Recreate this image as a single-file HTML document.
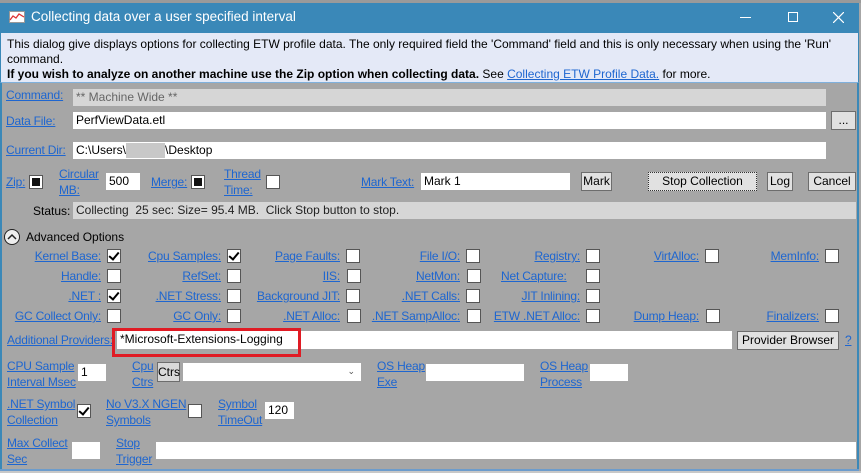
<!DOCTYPE html>
<html><head><meta charset="utf-8"><style>
*{margin:0;padding:0;box-sizing:border-box}
body{width:861px;height:473px;overflow:hidden;background:#a6a6a6;font-family:"Liberation Sans",sans-serif;font-size:12px;color:#000;position:relative}
div,span{position:absolute}
.t{white-space:nowrap;line-height:14px}
.l{color:#1e66d0;text-decoration:underline;white-space:nowrap;line-height:15px;letter-spacing:-0.2px}
.r{text-align:right}
.f{background:#fff;height:17px;padding-left:3px;line-height:17px;white-space:nowrap}
.cb{width:14px;height:14px;background:#fff;border:1px solid #555}
.ck::after{content:"";position:absolute;left:3px;top:0px;width:4px;height:8px;border:solid #000;border-width:0 2px 2px 0;transform:rotate(40deg)}
.fl::after{content:"";position:absolute;left:2px;top:2px;width:8px;height:8px;background:#111}
.b{background:#e1e1e1;border:1px solid #6d6d6d;text-align:center;line-height:16px;height:19px;white-space:nowrap}
</style></head><body>
<div style="left:0;top:0;width:861px;height:3px;background:#9a9a9a"></div>
<div style="left:0;top:3px;width:859px;height:30px;background:#3a88b8"></div>
<svg style="position:absolute;left:9px;top:11px" width="16" height="12"><rect x="0.5" y="0.5" width="15" height="11" fill="#fff" stroke="#999"/><polyline points="1,9 4,5 7,7 10,3 15,6" fill="none" stroke="#d33" stroke-width="1.3"/></svg>
<div class="t" style="left:31px;top:10px;color:#fff;font-size:13.5px">Collecting data over a user specified interval</div>
<div style="left:740px;top:17px;width:11px;height:1px;background:#fff"></div>
<div style="left:788px;top:12px;width:10px;height:10px;border:1px solid #fff"></div>
<svg style="position:absolute;left:833px;top:12px" width="11" height="11"><path d="M0,0L11,11M11,0L0,11" stroke="#fff" stroke-width="1.2"/></svg>
<div style="left:0;top:33px;width:859px;height:50px;background:#e4e9f7;border-left:1px solid #3a88b8;border-right:1px solid #3a88b8;border-bottom:1px solid #7fb0dc"></div>
<div class="t" style="left:7px;top:37px">This dialog give displays options for collecting ETW profile data. The only required field the 'Command' field and this is only necessary when using the 'Run'</div>
<div class="t" style="left:7px;top:52px">command.</div>
<div class="t" style="left:7px;top:67px"><b>If you wish to analyze on another machine use the Zip option when collecting data.</b> See <span class="l" style="position:static;letter-spacing:0">Collecting ETW Profile Data.</span> for more.</div>
<div style="left:0;top:83px;width:2px;height:388px;background:#3a88b8"></div>
<div style="left:857px;top:83px;width:2px;height:388px;background:#3a88b8"></div>
<div style="left:0;top:469px;width:859px;height:2px;background:#6c9ccc"></div>
<div style="left:0;top:471px;width:861px;height:2px;background:#c8c8c8"></div>

<div class="l" style="left:6px;top:88px">Command:</div>
<div class="f" style="left:73px;top:89px;width:753px;background:#d6d6d6;color:#666">** Machine Wide **</div>
<div class="l" style="left:6px;top:114px">Data File:</div>
<div class="f" style="left:73px;top:112px;width:753px">PerfViewData.etl</div>
<div class="b" style="left:831px;top:111px;width:25px">...</div>
<div class="l" style="left:6px;top:143px">Current Dir:</div>
<div class="f" style="left:73px;top:142px;width:753px">C:\Users\<span style="position:static;display:inline-block;width:39px;height:15px;background:#c8c8c8;vertical-align:middle"></span>\Desktop</div>

<div class="l" style="left:6px;top:175px">Zip:</div>
<div class="cb fl" style="left:29px;top:175px"></div>
<div class="l" style="left:59px;top:167px">Circular</div><div class="l" style="left:59px;top:183px">MB:</div>
<div class="f" style="left:106px;top:173px;width:34px">500</div>
<div class="l" style="left:151px;top:175px">Merge:</div>
<div class="cb fl" style="left:191px;top:175px"></div>
<div class="l" style="left:224px;top:167px">Thread</div><div class="l" style="left:224px;top:183px">Time:</div>
<div class="cb" style="left:266px;top:175px"></div>
<div class="l" style="left:361px;top:175px">Mark Text:</div>
<div class="f" style="left:421px;top:173px;width:149px">Mark 1</div>
<div class="b" style="left:581px;top:172px;width:31px">Mark</div>
<div class="b" style="left:648px;top:172px;width:109px;border:1px dotted #333">Stop Collection</div>
<div class="b" style="left:767px;top:172px;width:26px">Log</div>
<div class="b" style="left:808px;top:172px;width:48px">Cancel</div>

<div class="t" style="left:33px;top:204px">Status:</div>
<div class="f" style="left:73px;top:202px;width:783px;background:#d6d6d6;color:#222;line-height:17px">Collecting &nbsp;25 sec: Size= 95.4 MB. &nbsp;Click Stop button to stop.</div>

<div style="left:4px;top:229px;width:16px;height:16px;border:1px solid #222;border-radius:50%;background:#eee"></div>
<svg style="position:absolute;left:7px;top:233px" width="10" height="8"><path d="M1,6L5,2L9,6" fill="none" stroke="#222" stroke-width="1.5"/></svg>
<div class="t" style="left:26px;top:230px">Advanced Options</div>

<div class="l r" style="left:0;width:101px;top:249px">Kernel Base:</div><div class="cb ck" style="left:107px;top:249px"></div>
<div class="l r" style="left:120px;width:101px;top:249px">Cpu Samples:</div><div class="cb ck" style="left:227px;top:249px"></div>
<div class="l r" style="left:239px;width:101px;top:249px">Page Faults:</div><div class="cb" style="left:346px;top:249px"></div>
<div class="l r" style="left:359px;width:101px;top:249px">File I/O:</div><div class="cb" style="left:466px;top:249px"></div>
<div class="l r" style="left:479px;width:101px;top:249px">Registry:</div><div class="cb" style="left:586px;top:249px"></div>
<div class="l r" style="left:598px;width:101px;top:249px">VirtAlloc:</div><div class="cb" style="left:705px;top:249px"></div>
<div class="l r" style="left:718px;width:101px;top:249px">MemInfo:</div><div class="cb" style="left:825px;top:249px"></div>

<div class="l r" style="left:0;width:101px;top:269px">Handle:</div><div class="cb" style="left:107px;top:269px"></div>
<div class="l r" style="left:120px;width:101px;top:269px">RefSet:</div><div class="cb" style="left:227px;top:269px"></div>
<div class="l r" style="left:239px;width:101px;top:269px">IIS:</div><div class="cb" style="left:347px;top:269px"></div>
<div class="l r" style="left:359px;width:101px;top:269px">NetMon:</div><div class="cb" style="left:467px;top:269px"></div>
<div class="l" style="left:501px;top:269px">Net Capture:</div><div class="cb" style="left:586px;top:269px"></div>

<div class="l r" style="left:0;width:101px;top:289px">.NET :</div><div class="cb ck" style="left:107px;top:289px"></div>
<div class="l r" style="left:120px;width:101px;top:289px">.NET Stress:</div><div class="cb" style="left:227px;top:289px"></div>
<div class="l r" style="left:239px;width:101px;top:289px">Background JIT:</div><div class="cb" style="left:346px;top:289px"></div>
<div class="l r" style="left:359px;width:101px;top:289px">.NET Calls:</div><div class="cb" style="left:466px;top:289px"></div>
<div class="l r" style="left:479px;width:101px;top:289px">JIT Inlining:</div><div class="cb" style="left:586px;top:289px"></div>

<div class="l r" style="left:0;width:101px;top:309px">GC Collect Only:</div><div class="cb" style="left:107px;top:309px"></div>
<div class="l r" style="left:120px;width:101px;top:309px">GC Only:</div><div class="cb" style="left:227px;top:309px"></div>
<div class="l r" style="left:239px;width:101px;top:309px">.NET Alloc:</div><div class="cb" style="left:347px;top:309px"></div>
<div class="l r" style="left:339px;width:121px;top:309px">.NET SampAlloc:</div><div class="cb" style="left:467px;top:309px"></div>
<div class="l r" style="left:459px;width:121px;top:309px">ETW .NET Alloc:</div><div class="cb" style="left:586px;top:309px"></div>
<div class="l r" style="left:598px;width:101px;top:309px">Dump Heap:</div><div class="cb" style="left:706px;top:309px"></div>
<div class="l r" style="left:718px;width:101px;top:309px">Finalizers:</div><div class="cb" style="left:825px;top:309px"></div>

<div class="l" style="left:7px;top:333px">Additional Providers:</div>
<div class="f" style="left:117px;top:331px;width:615px;height:18px">*Microsoft-Extensions-Logging</div>
<div style="left:112px;top:328px;width:189px;height:29px;border:3px solid #e01b24"></div>
<div class="b" style="left:737px;top:331px;width:102px">Provider Browser</div>
<div class="l" style="left:845px;top:333px">?</div>

<div class="l" style="left:7px;top:359px">CPU Sample</div><div class="l" style="left:7px;top:375px">Interval Msec</div>
<div class="f" style="left:78px;top:364px;width:28px">1</div>
<div class="l" style="left:132px;top:359px">Cpu</div><div class="l" style="left:132px;top:375px">Ctrs</div>
<div class="b" style="left:157px;top:362px;width:23px;height:20px;background:#d8d8d8;line-height:18px">Ctrs</div>
<div class="f" style="left:183px;top:363px;width:178px;height:18px"><span style="right:6px;top:0;color:#555;font-size:9px">&#8964;</span></div>
<div class="l" style="left:377px;top:359px">OS Heap</div><div class="l" style="left:377px;top:375px">Exe</div>
<div class="f" style="left:426px;top:364px;width:98px"></div>
<div class="l" style="left:540px;top:359px">OS Heap</div><div class="l" style="left:540px;top:375px">Process</div>
<div class="f" style="left:590px;top:364px;width:38px"></div>

<div class="l" style="left:7px;top:397px">.NET Symbol</div><div class="l" style="left:7px;top:413px">Collection</div>
<div class="cb ck" style="left:77px;top:404px"></div>
<div class="l" style="left:106px;top:397px">No V3.X NGEN</div><div class="l" style="left:106px;top:413px">Symbols</div>
<div class="cb" style="left:188px;top:404px"></div>
<div class="l" style="left:218px;top:397px">Symbol</div><div class="l" style="left:218px;top:413px">TimeOut</div>
<div class="f" style="left:265px;top:402px;width:29px">120</div>

<div class="l" style="left:7px;top:436px">Max Collect</div><div class="l" style="left:7px;top:452px">Sec</div>
<div class="f" style="left:72px;top:442px;width:28px"></div>
<div class="l" style="left:116px;top:436px">Stop</div><div class="l" style="left:116px;top:452px">Trigger</div>
<div class="f" style="left:156px;top:442px;width:700px"></div>
</body></html>
